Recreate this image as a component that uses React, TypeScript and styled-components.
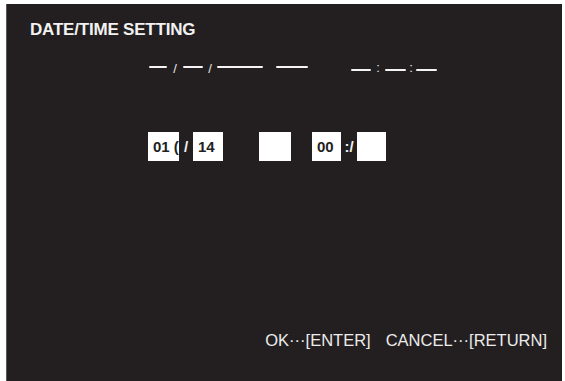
import React from 'react';
import styled, { createGlobalStyle } from 'styled-components';

const GlobalStyle = createGlobalStyle`
  html, body {
    margin: 0;
    padding: 0;
    background: #ffffff;
  }
  body {
    font-family: "Liberation Sans", Arial, sans-serif;
  }
`;

const Page = styled.div`
  width: 565px;
  height: 381px;
  padding: 4px 3px 0 5px;
  box-sizing: border-box;
  overflow: hidden;
`;

const Screen = styled.div`
  width: 556px;
  height: 377px;
  margin-left: 1px;
  background: #231f20;
  border-left: 1px solid #5a5758;
  box-sizing: border-box;
  display: flex;
  flex-direction: column;
  padding: 16px 15px 0 23px;
  color: #f2f2f2;
`;

const Title = styled.div`
  font-weight: 700;
  font-size: 17px;
  line-height: 19px;
  letter-spacing: -0.2px;
`;

const DashRow = styled.div`
  display: flex;
  align-items: flex-start;
  height: 14px;
  margin-top: 23px;
  padding-left: 119px;
`;

const Group = styled.div<{ $ml?: number; $mt?: number }>`
  display: flex;
  align-items: flex-start;
  margin-left: ${p => p.$ml ?? 0}px;
  margin-top: ${p => p.$mt ?? 0}px;
`;

const Dash = styled.div<{ $w: number }>`
  width: ${p => p.$w}px;
  height: 2px;
  margin-top: 4px;
  background: #f4f4f4;
  border-radius: 1px;
`;

const Mark = styled.span<{ $w: number; $top?: number }>`
  width: ${p => p.$w}px;
  text-align: center;
  font-size: 13px;
  line-height: 13px;
  margin-top: ${p => p.$top ?? 0}px;
  color: #e8e8e8;
`;

const BoxRow = styled.div`
  display: flex;
  align-items: center;
  margin-top: 56px;
  padding-left: 118px;
`;

const Box = styled.div<{ $w: number; $ml?: number }>`
  width: ${p => p.$w}px;
  height: 29px;
  margin-left: ${p => p.$ml ?? 0}px;
  background: #ffffff;
  color: #231f20;
  font-weight: 700;
  font-size: 15px;
  line-height: 30px;
  padding-left: 5px;
  box-sizing: border-box;
  white-space: nowrap;
  overflow: hidden;
`;

const BoxSep = styled.span<{ $w: number }>`
  width: ${p => p.$w}px;
  font-weight: 700;
  font-size: 15px;
  color: #f2f2f2;
  text-align: center;
  line-height: 29px;
`;

const Footer = styled.div`
  margin-top: auto;
  margin-bottom: 32px;
  align-self: flex-end;
  display: flex;
  gap: 15px;
  font-size: 16.5px;
  line-height: 18px;
  color: #ececec;
`;

const FooterItem = styled.span`
  white-space: nowrap;
`;

export default function App() {
  return (
    <>
      <GlobalStyle />
      <Page>
        <Screen>
          <Title>DATE/TIME SETTING</Title>
          <DashRow>
            <Group>
              <Dash $w={18} />
              <Mark $w={16} $top={0}>/</Mark>
              <Dash $w={20} />
              <Mark $w={14} $top={0}>/</Mark>
              <Dash $w={46} />
            </Group>
            <Group $ml={13}>
              <Dash $w={32} />
            </Group>
            <Group $ml={43} $mt={3}>
              <Dash $w={20} />
              <Mark $w={14} $top={-4}>:</Mark>
              <Dash $w={21} />
              <Mark $w={10} $top={-4}>:</Mark>
              <Dash $w={21} />
            </Group>
          </DashRow>
          <BoxRow>
            <Box $w={31}>01&nbsp;(</Box>
            <BoxSep $w={14}>/</BoxSep>
            <Box $w={30}>14</Box>
            <Box $w={32} $ml={36} />
            <Box $w={29} $ml={21}>00</Box>
            <BoxSep $w={16}>:/</BoxSep>
            <Box $w={29} />
          </BoxRow>
          <Footer>
            <FooterItem>OK···[ENTER]</FooterItem>
            <FooterItem>CANCEL···[RETURN]</FooterItem>
          </Footer>
        </Screen>
      </Page>
    </>
  );
}
